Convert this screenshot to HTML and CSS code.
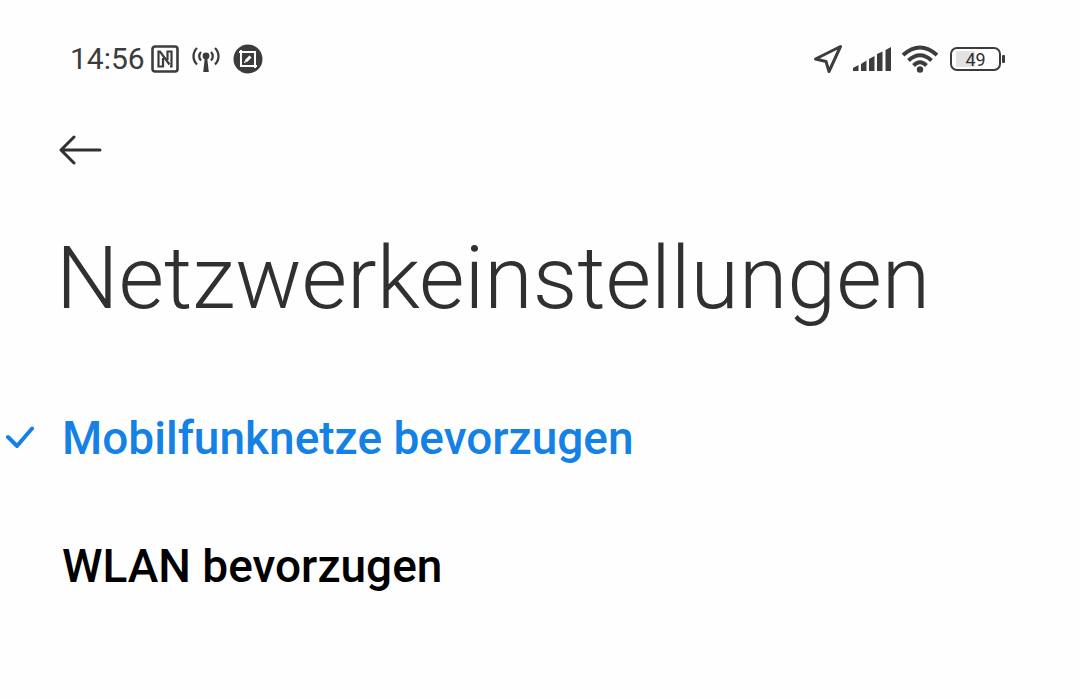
FILE: index.html
```html
<!DOCTYPE html>
<html lang="de">
<head>
    <meta charset="UTF-8">
    <meta name="viewport" content="width=device-width, initial-scale=1.0">
    <title>Netzwerkeinstellungen</title>
    <link rel="stylesheet" href="styles.css">
</head>
<body>
    <div class="status-bar">
        <div class="status-left">
            <span class="clock">14:56</span>
            <!-- NFC -->
            <svg class="icon" width="28" height="28" viewBox="0 0 28 28">
                <rect x="1.500" y="1.500" width="25" height="25" rx="2.500" stroke-width="2.600"/>
                <path d="M12 13V21.500H7.500V6.500H9L18.500 19.500" stroke-width="2.200"/>
                <path d="M16.500 15V6.500H20.500V21.500H19" stroke-width="2.200"/>
            </svg>
            <!-- Hotspot -->
            <svg class="icon" width="28" height="28" viewBox="0 0 28 28">
                <path d="M9 7A6 6 0 0 0 9 15.500M19 7A6 6 0 0 1 19 15.500" stroke-width="2.300"/>
                <path d="M5 3A11.500 11.500 0 0 0 5 19.500M23 3A11.500 11.500 0 0 1 23 19.500" stroke-width="2.300"/>
                <circle class="solid" cx="14" cy="11" r="3.400"/>
                <path class="solid" d="M12.800 13H15.200L16.800 27H11.200Z"/>
            </svg>
            <!-- Screenshot -->
            <svg class="icon" width="30" height="30" viewBox="0 0 30 30">
                <circle class="solid" cx="15" cy="15" r="14.500"/>
                <path class="light" d="M6 8H22V24M8 6V22H24" stroke-width="2"/>
                <path class="light" d="M13 17L17.500 12.500" stroke-width="3"/>
                <path class="light" d="M11.500 18.500L12.500 16.500L13.500 17.500Z" stroke-width="1"/>
            </svg>
        </div>
        <div class="status-right">
            <!-- Location -->
            <svg class="icon" width="31" height="30" viewBox="0 0 31 30">
                <path d="M28.500 2.500L3.500 15L14 17.500L17 27.500Z" stroke-width="3" stroke-linejoin="round"/>
            </svg>
            <!-- Signal -->
            <svg class="icon" width="38" height="26" viewBox="0 0 38 26">
                <path class="solid" d="M0 25V22L5.500 19V25ZM8 25V18L13.500 14.500V25ZM16 25V13L21.500 10V25ZM24 25V8L29.500 5.500V25ZM32.500 25V4L38 1V25Z"/>
            </svg>
            <!-- WLAN -->
            <svg class="icon" width="38" height="28" viewBox="0 0 38 28">
                <path d="M2 10Q19-5 36 10" stroke-width="4"/>
                <path d="M7.500 15.500Q19 5 30.500 15.500" stroke-width="4"/>
                <path d="M12.500 20.500Q19 14 25.500 20.500" stroke-width="4"/>
                <circle class="solid" cx="19" cy="24.500" r="3.200"/>
            </svg>
            <div class="battery">
                <span class="battery-body">49</span>
                <span class="battery-tip"></span>
            </div>
        </div>
    </div>

    <header class="header">
        <button class="back-btn" type="button" aria-label="Zurück">
            <svg class="back-icon" width="44" height="30" viewBox="0 0 44 30">
                <path d="M42 15H3M16 2L3 15L16 28"/>
            </svg>
        </button>
        <h1>Netzwerkeinstellungen</h1>
    </header>

    <main class="options">
        <label class="option">
            <input type="radio" name="network" value="mobile" checked>
            <svg class="check" width="30" height="24" viewBox="0 0 30 24">
                <path d="M3 11L12 20L27 2.500"/>
            </svg>
            <span class="option-label">Mobilfunknetze bevorzugen</span>
        </label>
        <label class="option">
            <input type="radio" name="network" value="wlan">
            <svg class="check" width="30" height="24" viewBox="0 0 30 24">
                <path d="M3 11L12 20L27 2.500"/>
            </svg>
            <span class="option-label">WLAN bevorzugen</span>
        </label>
    </main>
</body>
</html>
```
FILE: styles.css
```css
body {
    margin: 0;
    font-family: Roboto, sans-serif;
    background-color: #fefefe;
    color: #303030;
}

.status-bar {
    display: flex;
    justify-content: space-between;
    align-items: center;
    height: 36px;
    padding: 41px 75px 0 70px;
}

.status-left,
.status-right {
    display: flex;
    align-items: center;
}

.status-left {
    gap: 13px;
}

.status-right {
    gap: 10px;
}

.clock {
    margin-right: -7px;
    font-size: 30px;
    line-height: 36px;
    color: #3c3c3c;
}

.icon {
    display: block;
    fill: none;
    stroke: #3c3c3c;
}

.icon .solid {
    fill: #3c3c3c;
    stroke: none;
}

.icon .light {
    stroke: #fff;
}

.battery {
    display: flex;
    align-items: center;
    gap: 1px;
    margin-left: 1px;
}

.battery-body {
    box-sizing: border-box;
    width: 51px;
    height: 24px;
    border: 2px solid #3c3c3c;
    border-radius: 7px;
    background: linear-gradient(to right, #e2e2e2 50%, #fefefe 50%) content-box no-repeat;
    padding: 2px 4px;
    font-size: 18px;
    line-height: 18px;
    text-align: center;
    color: #303030;
}

.battery-tip {
    width: 3px;
    height: 8px;
    border-radius: 1px;
    background-color: #3c3c3c;
}

.header {
    padding: 58px 56px 44px;
}

.back-btn {
    display: block;
    margin-bottom: 61px;
    padding: 0 2px;
    border: none;
    background: none;
    cursor: pointer;
}

.back-icon {
    display: block;
    fill: none;
    stroke: #303030;
    stroke-width: 3;
    stroke-linecap: round;
    stroke-linejoin: round;
}

h1 {
    margin: 0;
    font-size: 88px;
    font-weight: 300;
    line-height: 104px;
}

.option {
    display: grid;
    grid-template-columns: 30px 1fr;
    column-gap: 27px;
    align-items: center;
    height: 128px;
    padding-left: 5px;
    cursor: pointer;
}

.option input {
    grid-area: 1 / 1;
    appearance: none;
    width: 30px;
    height: 30px;
    margin: 0;
}

.check {
    grid-area: 1 / 1;
    visibility: hidden;
    fill: none;
    stroke: #1481e6;
    stroke-width: 4;
    stroke-linecap: round;
    stroke-linejoin: round;
}

.option-label {
    font-size: 46px;
    font-weight: 500;
    line-height: 54px;
    color: #000;
}

.option input:checked ~ .check {
    visibility: visible;
}

.option input:checked ~ .option-label {
    color: #1481e6;
}
```
